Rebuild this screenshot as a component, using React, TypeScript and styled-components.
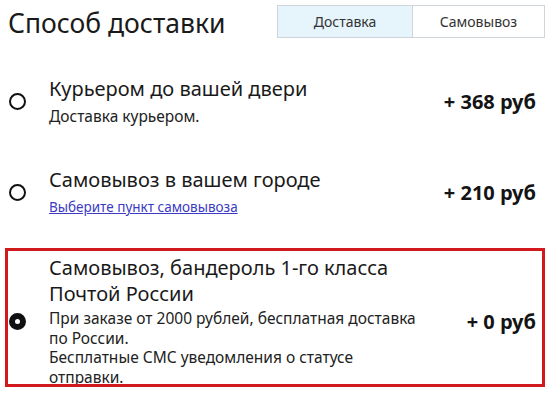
import React, { useState } from "react";
import styled, { createGlobalStyle } from "styled-components";

const Global = createGlobalStyle`
  html, body { margin: 0; padding: 0; background: #ffffff; }
  body {
    font-family: "Noto Sans", "Open Sans", "Liberation Sans", sans-serif;
    color: #1c1c1c;
  }
  * { box-sizing: border-box; }
`;

const Page = styled.div`
  width: 549px;
  height: 393px;
  overflow: hidden;
`;

const Header = styled.header`
  height: 55px;
  display: flex;
  justify-content: space-between;
  align-items: flex-start;
  padding: 0 4px 0 8px;
`;

const Title = styled.h1`
  margin: 7px 0 0;
  font-size: 26.5px;
  line-height: 32px;
  font-weight: 400;
  color: #1a1a1a;
`;

const Tabs = styled.div`
  margin-top: 5px;
  display: flex;
  height: 33px;
  border: 1px solid #cdd4da;
`;

const Tab = styled.button<{ $active?: boolean; $w: number }>`
  width: ${(p) => p.$w}px;
  height: 100%;
  border: none;
  border-left: 1px solid #cdd4da;
  background: ${(p) => (p.$active ? "#e6f4fc" : "#ffffff")};
  font-family: inherit;
  font-size: 14px;
  color: #333333;
  padding: 0;
  cursor: pointer;
  &:first-child { border-left: none; }
`;

const List = styled.div`
  display: flex;
  flex-direction: column;
`;

const Option = styled.div<{ $selected?: boolean }>`
  margin: ${(p) => (p.$selected ? "11px 4px 0 5px" : "0 4px 0 5px")};
  border: 3px solid ${(p) => (p.$selected ? "#d2191d" : "transparent")};
  ${(p) => (p.$selected ? "height: 139px; overflow: hidden;" : "")}
`;

const OptionBody = styled.div<{ $selected?: boolean }>`
  display: flex;
  align-items: center;
  padding: ${(p) => (p.$selected ? "4px 6px 0 1px" : "18px 6px 17px 1px")};
`;

const Radio = styled.span<{ $checked?: boolean }>`
  flex: none;
  width: 17px;
  height: 17px;
  border-radius: 50%;
  margin-right: 23px;
  border: 2px solid #111111;
  background: ${(p) => (p.$checked ? "#111111" : "#ffffff")};
  display: flex;
  align-items: center;
  justify-content: center;
  &::after {
    content: "";
    display: ${(p) => (p.$checked ? "block" : "none")};
    width: 5px;
    height: 5px;
    border-radius: 50%;
    background: #ffffff;
  }
`;

const Info = styled.div`
  flex: 1;
  min-width: 0;
  margin-right: 40px;
`;

const OptionTitle = styled.div`
  font-size: 20px;
  line-height: 26px;
  color: #1a1a1a;
`;

const Description = styled.div<{ $tight?: boolean }>`
  margin-top: ${(p) => (p.$tight ? "2px" : "4px")};
  font-size: 15.5px;
  line-height: ${(p) => (p.$tight ? "19.5px" : "20px")};
  color: #222222;
`;

const DescLine = styled.p`
  margin: 0;
`;

const PickLink = styled.a`
  display: block;
  margin-top: 4px;
  font-size: 13.5px;
  line-height: 20px;
  color: #3a3ac4;
  text-decoration: underline;
  cursor: pointer;
`;

const Price = styled.div`
  flex: none;
  margin-left: auto;
  font-size: 20px;
  font-weight: 700;
  color: #141414;
  white-space: nowrap;
`;

type Opt = {
  id: string;
  title: string;
  desc?: string[];
  link?: string;
  price: number;
};

const options: Opt[] = [
  { id: "courier", title: "Курьером до вашей двери", desc: ["Доставка курьером."], price: 368 },
  { id: "pickup", title: "Самовывоз в вашем городе", link: "Выберите пункт самовывоза", price: 210 },
  {
    id: "post",
    title: "Самовывоз, бандероль 1-го класса Почтой России",
    desc: [
      "При заказе от 2000 рублей, бесплатная доставка по России.",
      "Бесплатные СМС уведомления о статусе отправки.",
    ],
    price: 0,
  },
];

export default function App() {
  const [tab, setTab] = useState("delivery");
  const [selected, setSelected] = useState("post");
  return (
    <Page>
      <Global />
      <Header>
        <Title>Способ доставки</Title>
        <Tabs>
          <Tab $w={134} $active={tab === "delivery"} onClick={() => setTab("delivery")}>
            Доставка
          </Tab>
          <Tab $w={132} $active={tab === "pickup"} onClick={() => setTab("pickup")}>
            Самовывоз
          </Tab>
        </Tabs>
      </Header>
      <List>
        {options.map((o) => {
          const sel = o.id === selected;
          return (
            <Option key={o.id} $selected={sel} onClick={() => setSelected(o.id)}>
              <OptionBody $selected={sel}>
                <Radio $checked={sel} />
                <Info>
                  <OptionTitle>{o.title}</OptionTitle>
                  {o.desc && (
                    <Description $tight={sel}>
                      {o.desc.map((d) => (
                        <DescLine key={d}>{d}</DescLine>
                      ))}
                    </Description>
                  )}
                  {o.link && <PickLink>{o.link}</PickLink>}
                </Info>
                <Price>+ {o.price} руб</Price>
              </OptionBody>
            </Option>
          );
        })}
      </List>
    </Page>
  );
}
